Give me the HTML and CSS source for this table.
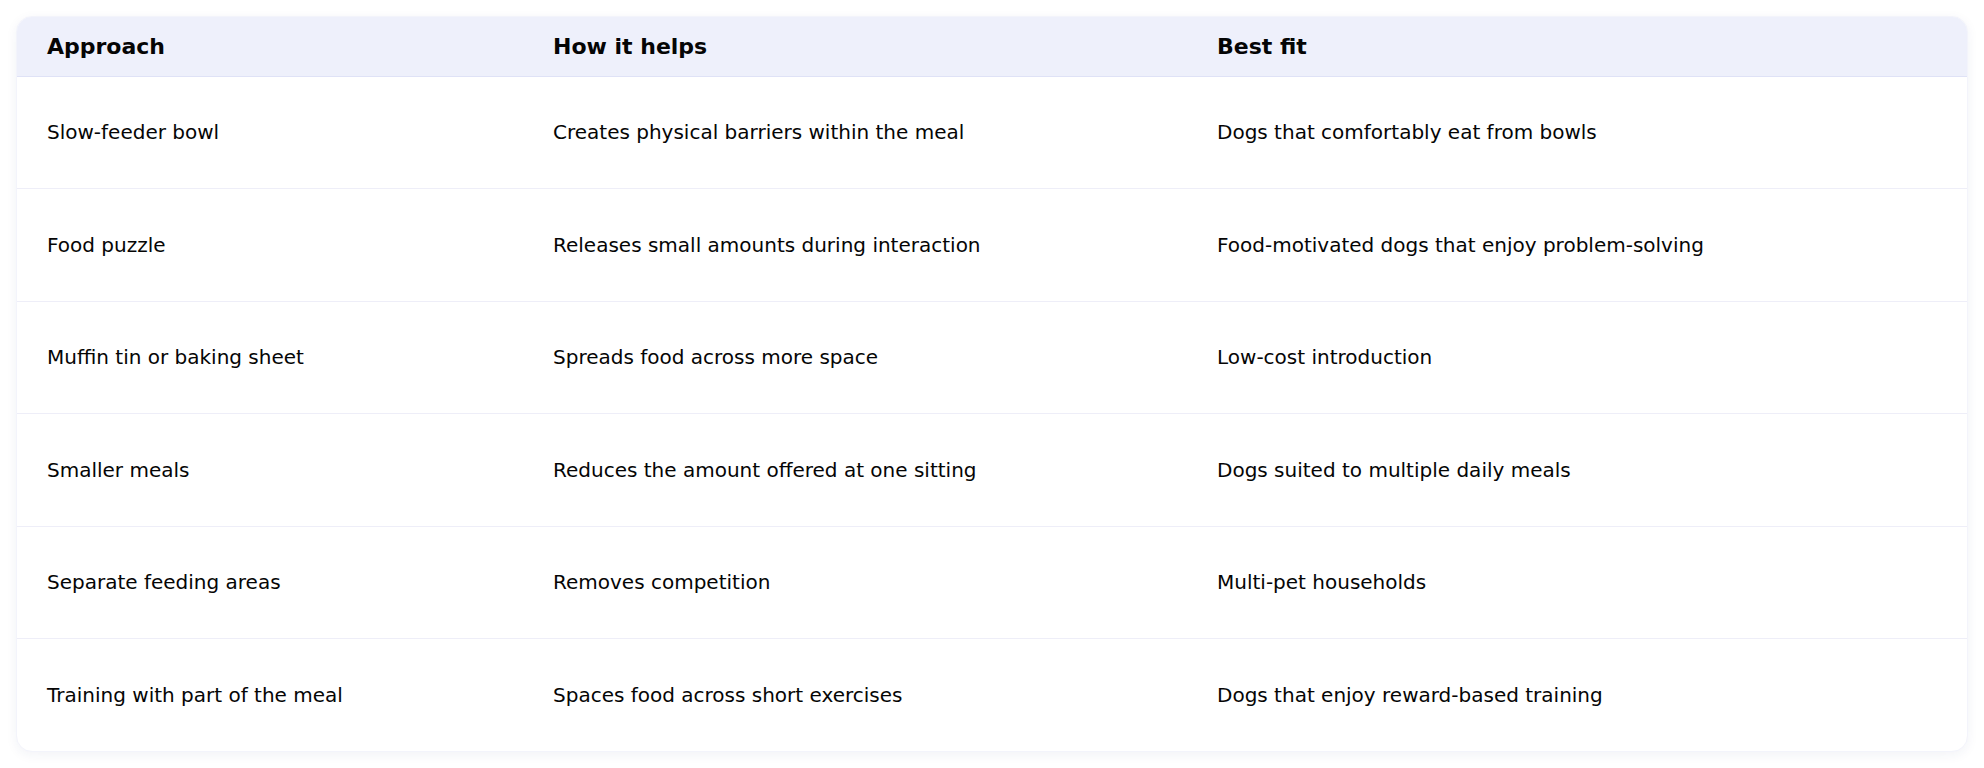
FILE: index.html
```html
<!DOCTYPE html>
<html lang="en">
<head>
<meta charset="utf-8">
<title>Feeding approaches</title>
<link rel="stylesheet" href="styles.css">
</head>
<body>
<div class="card">
  <table class="tbl">
    <colgroup>
      <col class="c1"><col class="c2"><col class="c3">
    </colgroup>
    <thead>
      <tr><th>Approach</th><th>How it helps</th><th>Best fit</th></tr>
    </thead>
    <tbody>
      <tr><td>Slow-feeder bowl</td><td>Creates physical barriers within the meal</td><td>Dogs that comfortably eat from bowls</td></tr>
      <tr><td>Food puzzle</td><td>Releases small amounts during interaction</td><td>Food-motivated dogs that enjoy problem-solving</td></tr>
      <tr><td>Muffin tin or baking sheet</td><td>Spreads food across more space</td><td>Low-cost introduction</td></tr>
      <tr><td>Smaller meals</td><td>Reduces the amount offered at one sitting</td><td>Dogs suited to multiple daily meals</td></tr>
      <tr><td>Separate feeding areas</td><td>Removes competition</td><td>Multi-pet households</td></tr>
      <tr><td>Training with part of the meal</td><td>Spaces food across short exercises</td><td>Dogs that enjoy reward-based training</td></tr>
    </tbody>
  </table>
</div>
</body>
</html>
```
FILE: styles.css
```css
html, body {
  margin: 0;
  padding: 0;
  background: #ffffff;
}
body {
  padding: 16px;
  font-family: "DejaVu Sans", sans-serif;
  color: #050505;
}
.card {
  background: #ffffff;
  border: 1px solid #f3f4fb;
  border-radius: 16px;
  box-shadow: 0 3px 12px rgba(40, 50, 120, 0.06);
  overflow: hidden;
}
.tbl {
  width: 100%;
  border-collapse: collapse;
  table-layout: fixed;
}
.c1 { width: 506px; }
.c2 { width: 664px; }
.c3 { width: auto; }
.tbl th {
  background: #eef0fb;
  text-align: left;
  font-weight: bold;
  font-size: 22px;
  height: 59px;
  padding: 0 30px;
  border-bottom: 1px solid #dfe2f6;
  box-sizing: border-box;
}
.tbl td {
  font-size: 20px;
  height: 112.5px;
  padding: 0 30px;
  border-bottom: 1px solid #eeeef8;
  box-sizing: border-box;
}
.tbl tbody tr:last-child td {
  border-bottom: none;
}
```
